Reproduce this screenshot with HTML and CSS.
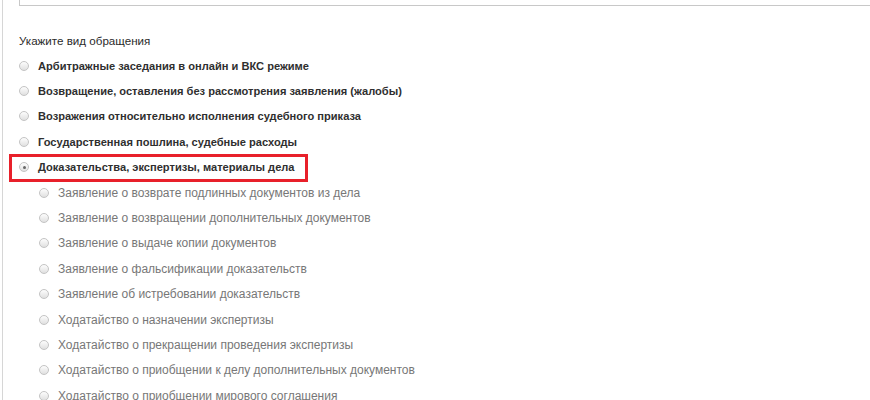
FILE: index.html
```html
<!DOCTYPE html>
<html lang="ru">

<head>
  <meta charset="UTF-8" />
  <title>Вид обращения</title>
  <link rel="stylesheet" href="styles.css">
</head>

<body>
  <div class="panel">
    <!-- поле сверху (продолжение формы) -->
    <div class="field"></div>

    <div class="group">
      <div class="caption">Укажите вид обращения</div>

      <ul class="kinds">
        <li class="kind"><span class="radio"></span>Арбитражные заседания в онлайн и ВКС режиме</li>
        <li class="kind"><span class="radio"></span>Возвращение, оставления без рассмотрения заявления (жалобы)</li>
        <li class="kind"><span class="radio"></span>Возражения относительно исполнения судебного приказа</li>
        <li class="kind"><span class="radio"></span>Государственная пошлина, судебные расходы</li>
        <li class="kind open">
          <div class="kind-title marked"><span class="radio checked"></span>Доказательства, экспертизы, материалы дела</div>
          <ul class="subkinds">
            <li class="sub"><span class="radio"></span>Заявление о возврате подлинных документов из дела</li>
            <li class="sub"><span class="radio"></span>Заявление о возвращении дополнительных документов</li>
            <li class="sub"><span class="radio"></span>Заявление о выдаче копии документов</li>
            <li class="sub"><span class="radio"></span>Заявление о фальсификации доказательств</li>
            <li class="sub"><span class="radio"></span>Заявление об истребовании доказательств</li>
            <li class="sub"><span class="radio"></span>Ходатайство о назначении экспертизы</li>
            <li class="sub"><span class="radio"></span>Ходатайство о прекращении проведения экспертизы</li>
            <li class="sub"><span class="radio"></span>Ходатайство о приобщении к делу дополнительных документов</li>
            <li class="sub"><span class="radio"></span>Ходатайство о приобщении мирового соглашения</li>
          </ul>
        </li>
      </ul>
    </div>
  </div>
</body>

</html>
```

FILE: styles.css
```css
html,
body {
  margin: 0;
  padding: 0;
  background-color: #fff;
  overflow: hidden;
}

body {
  font-family: "Liberation Sans", Arial, sans-serif;
  font-size: 12px;
  color: #333;
}

.panel {
  margin-left: 2px;
  min-height: 400px;
  border-left: 1px solid #d6d6d6;
  padding-left: 16px;
}

/* нижний край поля ввода */
.field {
  height: 6px;
  width: 900px;
  border: 1px solid #c8c8c8;
  border-top: none;
  box-sizing: border-box;
}

.group {
  padding-top: 22px;
}

.caption {
  height: 25px;
  line-height: 25px;
  font-size: 11.6px;
  color: #2b2b2b;
}

.kinds,
.subkinds {
  list-style: none;
  margin: 0;
  padding: 0;
}

.kind,
.kind-title,
.sub {
  display: flex;
  align-items: center;
  height: 25.4px;
}

.kind {
  font-weight: bold;
  font-size: 11.1px;
  color: #2f2f2f;
}

.kind.open {
  display: block;
  height: auto;
}

.kind-title {
  position: relative;
  width: max-content;
}

/* красная рамка вокруг выбранного пункта */
.kind-title.marked::after {
  content: "";
  position: absolute;
  left: -10px;
  right: -13px;
  top: -1px;
  bottom: -2px;
  border: 3px solid #e8202a;
}

.sub {
  font-weight: normal;
  font-size: 12px;
  color: #777;
  padding-left: 20px;
}

.radio {
  display: inline-block;
  width: 10px;
  height: 10px;
  margin-right: 9px;
  border: 1px solid #c4c4c4;
  border-radius: 50%;
  background: linear-gradient(#fdfdfd, #e0e0e0);
  box-sizing: border-box;
  flex: none;
  position: relative;
}

.radio.checked::after {
  content: "";
  position: absolute;
  left: 2.5px;
  top: 2.5px;
  width: 3px;
  height: 3px;
  border-radius: 50%;
  background-color: #666;
}
```
